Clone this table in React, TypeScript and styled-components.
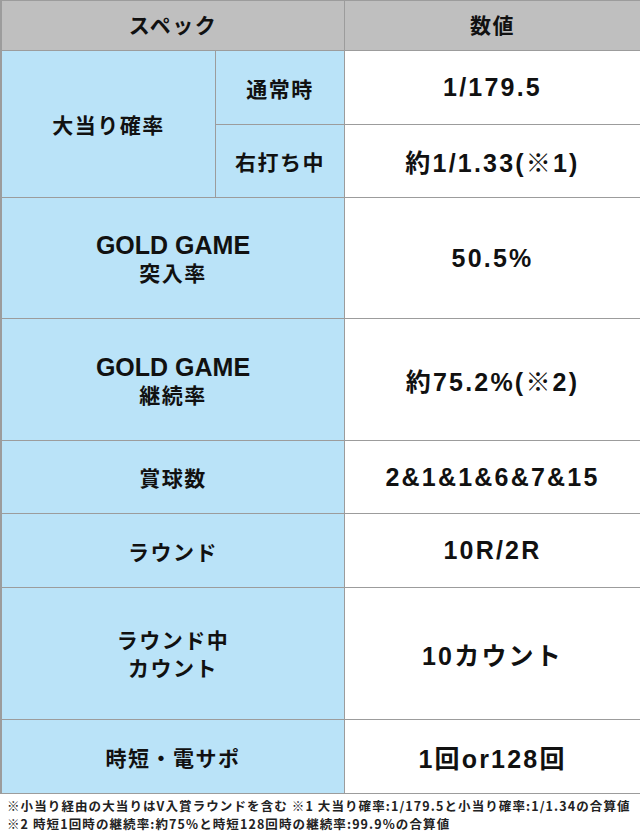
import { createGlobalStyle } from 'styled-components';
import styled from 'styled-components';

const GlobalStyle = createGlobalStyle`
  html, body {
    margin: 0;
    padding: 0;
    background: #fff;
  }
  body {
    font-family: "Liberation Sans", "Noto Sans CJK JP", sans-serif;
    color: #111;
  }
`;

const rows = [
  { label: 'GOLD GAME', sub: '突入率', value: '50.5%' },
  { label: 'GOLD GAME', sub: '継続率', value: '約75.2%(※2)' },
  { label: '賞球数', value: '2&1&1&6&7&15' },
  { label: 'ラウンド', value: '10R/2R' },
  { label: 'ラウンド中', sub: 'カウント', value: '10カウント', tall: true },
  { label: '時短・電サポ', value: '1回or128回' },
];

export default function App() {
  return (
    <Page>
      <GlobalStyle />
      <SpecGrid>
        <HeadCell $span={2}>スペック</HeadCell>
        <HeadCell>数値</HeadCell>

        <LabelCell $rowSpan={2}>大当り確率</LabelCell>
        <LabelCell>通常時</LabelCell>
        <ValueCell>1/179.5</ValueCell>
        <LabelCell>右打ち中</LabelCell>
        <ValueCell>約1/1.33(※1)</ValueCell>

        {rows.map((r, i) => (
          <Row key={i}>
            <LabelCell $span={2}>
              {r.sub ? (
                <TwoLine $tall={r.tall}>
                  <Latin $jp={r.tall}>{r.label}</Latin>
                  <br />
                  {r.sub}
                </TwoLine>
              ) : (
                r.label
              )}
            </LabelCell>
            <ValueCell>{r.value}</ValueCell>
          </Row>
        ))}
      </SpecGrid>

      <Notes>
        <p>※小当り経由の大当りはV入賞ラウンドを含む ※1 大当り確率:1/179.5と小当り確率:1/1.34の合算値</p>
        <p>※2 時短1回時の継続率:約75%と時短128回時の継続率:99.9%の合算値</p>
      </Notes>
    </Page>
  );
}

const Page = styled.div`
  width: 640px;
`;

const SpecGrid = styled.div`
  display: grid;
  grid-template-columns: 213px 128px 295px;
  grid-template-rows: 49px 73px 72px 120px 121px 72px 73px 131px 73px;
  gap: 1px;
  padding: 1px 1px 1px 2px;
  background: #9c9c9c;
`;

const Row = styled.div`
  display: contents;
`;

const Cell = styled.div<{ $span?: number; $rowSpan?: number }>`
  display: flex;
  align-items: center;
  justify-content: center;
  text-align: center;
  font-weight: 700;
  grid-column: span ${p => p.$span ?? 1};
  grid-row: span ${p => p.$rowSpan ?? 1};
`;

const HeadCell = styled(Cell)`
  background: #bfbfbf;
  font-family: "Noto Sans CJK JP", sans-serif;
  font-size: 21px;
  letter-spacing: 1.5px;
  padding-bottom: 4px;
`;

const LabelCell = styled(Cell)`
  background: #bae3f8;
  font-family: "Noto Sans CJK JP", sans-serif;
  font-size: 21px;
  letter-spacing: 1.5px;
`;

const TwoLine = styled.span<{ $tall?: boolean }>`
  display: block;
  line-height: ${p => (p.$tall ? '28px' : '27px')};
  padding: ${p => (p.$tall ? '0 0 2px' : '2px 0 0')};
`;

const Latin = styled.span<{ $jp?: boolean }>`
  font-family: ${p => (p.$jp ? '"Noto Sans CJK JP", sans-serif' : '"Liberation Sans", sans-serif')};
  font-size: ${p => (p.$jp ? '21px' : '25px')};
  letter-spacing: ${p => (p.$jp ? '1.5px' : '0')};
`;

const ValueCell = styled(Cell)`
  background: #fff;
  font-family: "Liberation Sans", "Noto Sans CJK JP", sans-serif;
  font-size: 25px;
  letter-spacing: 2.2px;
`;

const Notes = styled.div`
  padding: 3px 0 0 7px;
  font-family: "Noto Sans CJK JP", sans-serif;
  font-weight: 700;
  font-size: 12.5px;
  line-height: 18px;
  color: #222;
  letter-spacing: 1.1px;

  p {
    margin: 0;
    white-space: nowrap;
  }
`;
